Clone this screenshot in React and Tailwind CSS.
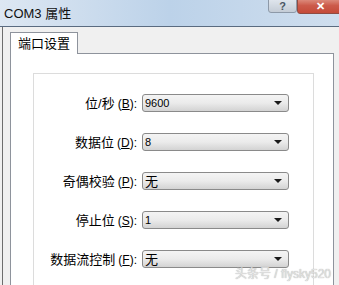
import React from 'react';

const rows = [
  { name: '位/秒', key: 'B', value: '9600', cjk: false },
  { name: '数据位', key: 'D', value: '8', cjk: false },
  { name: '奇偶校验', key: 'P', value: '无', cjk: true },
  { name: '停止位', key: 'S', value: '1', cjk: false },
  { name: '数据流控制', key: 'F', value: '无', cjk: true },
];

const Combo = ({ value, cjk }) => (
  <div className="h-[18px] w-[147px] rounded-[3px] border border-[#8a8a8a] bg-gradient-to-b from-[#f4f4f4] via-[#ebebeb] to-[#d3d3d3] flex items-center pl-[2px] pr-[6px]">
    <span className={cjk ? 'text-[13px] leading-none text-black' : 'text-[11px] leading-none text-black'}>{value}</span>
    <span className="ml-auto w-0 h-0 border-l-[4px] border-r-[4px] border-t-[4px] border-l-transparent border-r-transparent border-t-[#1a1a1a]"></span>
  </div>
);

const App = () => (
  <div className="relative w-[339px] h-[285px] overflow-hidden bg-[#f0f0f0] font-['Liberation_Sans','Noto_Sans_CJK_SC',sans-serif] text-black">
    {/* title bar */}
    <div className="relative h-[27px] border-b border-[#5a6b80] bg-gradient-to-r from-[#dde7f2] via-[#bcd2e9] to-[#cfdeee] flex items-center pl-[4px]">
      <span className="text-[13px] leading-none text-[#111]">COM3 属性</span>
      <div className="absolute right-[42px] top-[-3px] w-[29px] h-[16px] rounded-b-[3px] border border-[#8d99a8] bg-gradient-to-b from-[#e3e9f0] to-[#c4ccd6] flex items-center justify-center pt-[2px]">
        <span className="text-[11px] leading-none font-bold text-[#4a5563]">?</span>
      </div>
      <div className="absolute right-[-4px] top-[-3px] w-[46px] h-[17px] rounded-b-[3px] border border-[#8f4b42] bg-gradient-to-b from-[#e0988b] via-[#cc5b4b] to-[#c44a38] flex items-center justify-center pt-[2px]">
        <span className="text-[11px] leading-none font-bold text-white">✕</span>
      </div>
    </div>

    {/* body */}
    <div className="ml-[2px] h-full border-l border-[#6d6d6d] pl-[7px] pr-[5px] pt-[5px]">
      <div className="flex">
        <div className="h-[22px] px-[7px] border border-b-0 border-[#8e939c] bg-white flex items-center -mb-px relative z-10">
          <span className="text-[13px] leading-none">端口设置</span>
        </div>
      </div>
      <div className="h-[260px] border border-[#8e939c] bg-white pl-[22px] pr-[19px] pt-[19px]">
        <div className="h-[240px] border border-[#dcdcdc] pt-[20px]">
          <div className="grid grid-cols-[103px_147px] gap-x-[5px] gap-y-[21px] items-center">
            {rows.map((r) => (
              <React.Fragment key={r.key}>
                <div className="text-right text-[13px] leading-none whitespace-nowrap">
                  {r.name}
                  <span className="ml-[3px] text-[12px]">(<u>{r.key}</u>):</span>
                </div>
                <Combo value={r.value} cjk={r.cjk} />
              </React.Fragment>
            ))}
          </div>
        </div>
      </div>
    </div>

    {/* watermark */}
    <div className="absolute right-[8px] bottom-[5px] text-[12px] leading-none text-[#e2e2e2] [text-shadow:0_0_1px_#9a9a9a]">
      头条号 / flysky520
    </div>
  </div>
);

export default App;
